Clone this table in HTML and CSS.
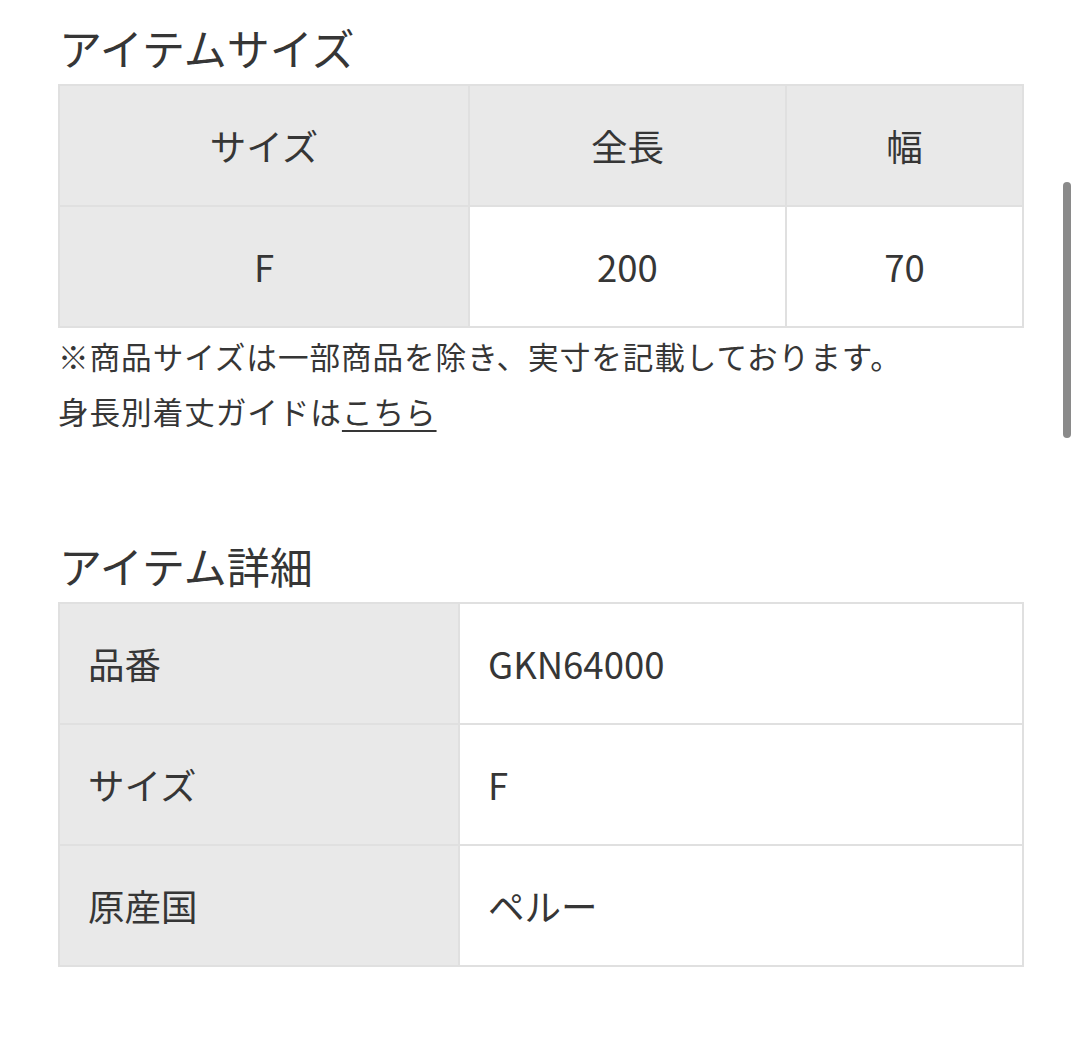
FILE: index.html
```html
<!DOCTYPE html>
<html lang="ja">
<head>
<meta charset="utf-8">
<link rel="stylesheet" href="styles.css">
</head>
<body>
<main class="page">
  <section class="section">
    <h2 class="title">アイテムサイズ</h2>
    <table class="size-table">
      <colgroup><col class="c1"><col class="c2"><col class="c3"></colgroup>
      <tr class="head">
        <th>サイズ</th><th>全長</th><th>幅</th>
      </tr>
      <tr>
        <th>F</th><td>200</td><td>70</td>
      </tr>
    </table>
    <p class="note">※商品サイズは一部商品を除き、実寸を記載しております。<br>身長別着丈ガイドは<a class="link" href="#">こちら</a></p>
  </section>
  <section class="section second">
    <h2 class="title">アイテム詳細</h2>
    <table class="detail-table">
      <colgroup><col class="d1"><col class="d2"></colgroup>
      <tr><th>品番</th><td>GKN64000</td></tr>
      <tr><th>サイズ</th><td>F</td></tr>
      <tr><th>原産国</th><td>ペルー</td></tr>
    </table>
  </section>
  <div class="scrollbar"></div>
</main>
</body>
</html>
```
FILE: styles.css
```css
html, body {
  margin: 0;
  padding: 0;
  background: #fff;
}
body {
  font-family: "Noto Sans CJK JP", "Noto Sans", sans-serif;
  color: #363636;
}
.page {
  position: relative;
  width: 1080px;
  height: 1044px;
  padding: 17px 0 0 58px;
  box-sizing: border-box;
}
.title {
  margin: 0 0 7px 1px;
  font-size: 43px;
  font-weight: 400;
  line-height: 60px;
  color: #363636;
}
.second {
  margin-top: 96px;
}
table {
  border-collapse: collapse;
  width: 964px;
  table-layout: fixed;
}
th, td {
  border: 2px solid #e0e0e0;
  font-weight: 400;
  font-size: 36.5px;
  color: #363636;
}
.size-table .c1 { width: 410px; }
.size-table .c2 { width: 317px; }
.size-table .c3 { width: 237px; }
.size-table th, .size-table td {
  text-align: center;
  height: 119px;
  padding: 0;
}
.size-table th { background: #e9e9e9; }
.size-table td { background: #fff; }
.size-table .head td, .size-table .head th { background: #e9e9e9; }
.detail-table .d1 { width: 400px; }
.detail-table .d2 { width: 564px; }
.detail-table th, .detail-table td {
  text-align: left;
  height: 119px;
  padding: 0 0 0 28px;
}
.detail-table th { background: #e9e9e9; }
.detail-table td { background: #fff; }
.note {
  margin: 1px 0 0 0;
  font-size: 30.6px;
  line-height: 55px;
  letter-spacing: 0.95px;
  color: #363636;
}
.link {
  color: #363636;
  text-decoration: underline;
  text-underline-offset: 6px;
  text-decoration-thickness: 2px;
}
.scrollbar {
  position: absolute;
  left: 1063px;
  top: 182px;
  width: 8px;
  height: 256px;
  border-radius: 4px;
  background: #8a8a8a;
}
```
